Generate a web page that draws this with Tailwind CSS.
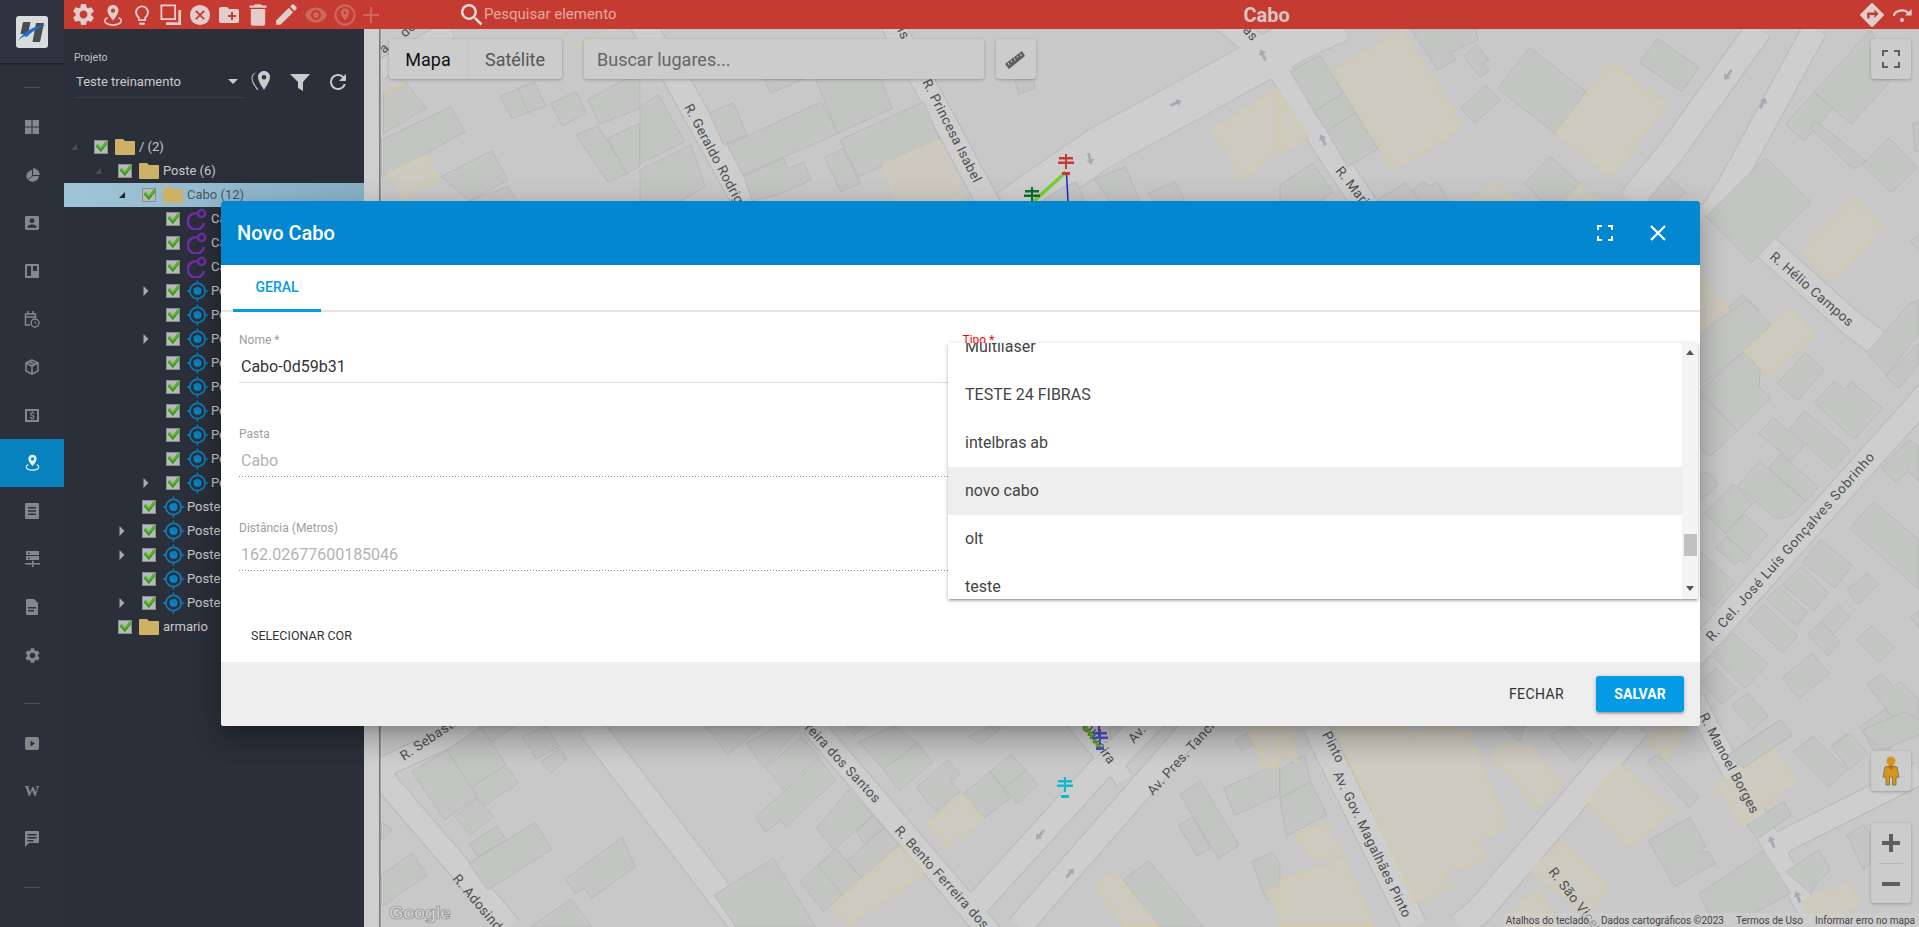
<!DOCTYPE html>
<html lang="pt-BR">
<head>
<meta charset="utf-8" />
<title>Cabo</title>
<script src="https://cdn.jsdelivr.net/npm/@tailwindcss/browser@4"></script>
</head>
<body class="font-[family-name:Roboto,sans-serif] bg-[#2b2f39] overflow-hidden">

<!-- shared icons -->
<svg class="hidden">
  <symbol id="chk" viewBox="0 0 14 14"><rect x=".5" y=".5" width="13" height="13" fill="#b9bbbb" stroke="#8a8c8d"/><path d="M1.500 6l2.500-2 2.800 3L12 1l2 2.200-7.200 9z" fill="#3f9a25"/><path d="M4 4.800l2.800 2.800L12 2.200l.8 1L6.800 9 3 5.600z" fill="#6cc83a"/></symbol>
  <symbol id="folder" viewBox="0 0 20 16"><path d="M1 0h7l2 2h9q1 0 1 1v12q0 1-1 1H1q-1 0-1-1V1q0-1 1-1z" fill="#cdb266"/></symbol>
  <symbol id="cable" viewBox="0 0 21 22"><circle cx="14.500" cy="5.500" r="3.600" fill="none" stroke="#6f2eab" stroke-width="2.400"/><path d="M10 5.300A8.200 8.200 0 1 0 17 15" fill="none" stroke="#6f2eab" stroke-width="2.600"/></symbol>
  <symbol id="target" viewBox="0 0 22 22"><circle cx="11" cy="11" r="8" fill="none" stroke="#0b7fbf" stroke-width="1.800"/><circle cx="11" cy="11" r="4.300" fill="#0b7fbf"/><path d="M11 0v3M11 19v3M0 11h3M19 11h3" stroke="#0b7fbf" stroke-width="1.400"/></symbol>
  <symbol id="open" viewBox="0 0 8 8"><path d="M7 1v6H1z" fill="currentColor"/></symbol>
  <symbol id="closed" viewBox="0 0 8 12"><path d="M1.500 1l5 5-5 5z" fill="#a6a8aa"/></symbol>
  <symbol id="pole" viewBox="0 0 16 22"><path d="M7 0h2v3h6v2.500H9v2h7V10H9v5H7v-5H0V7.500h7v-2H1V3h6z" fill="currentColor"/><rect x="4" y="18" width="8" height="3" fill="currentColor"/></symbol>
  <symbol id="arr" viewBox="-6 -7 12 14"><path d="M0-6l4 5H1.400v7h-2.800v-7H-4z" fill="#a5a9b5"/></symbol>
</svg>

<div class="flex h-[927px] w-[1919px] relative">

  <!-- left rail -->
  <aside class="w-16 shrink-0 bg-[#2b303a] flex flex-col items-center text-[#85878a]">
    <div class="w-full h-[63px] bg-[#2f323e] shadow-[0_1px_2px_rgba(0,0,0,.4)] flex items-center justify-center">
      <svg width="32" height="32" viewBox="0 0 32 32"><rect width="32" height="32" rx="3" fill="#d8dcdd"/><path d="M7 6h7.500l-2.500 12H4.500zM20 7h8l-4 19h-7.500z" fill="#4a4c4f"/><path d="M2 25C8 15 18 10 30 9 22 12 15 16 11 21 8 19 5 22 2 25z" fill="#1a6fd0"/></svg>
    </div>
    <div class="h-10 w-full flex items-center justify-center"><div class="w-4 h-px bg-[#4b4f57] mt-[8px]"></div></div>
    <a class="h-12 w-full flex items-center justify-center"><svg width="14" height="14" viewBox="0 0 14 14" fill="currentColor"><path d="M0 0h6.500v6.500H0zM7.500 0H14v6.500H7.500zM0 7.500h6.500V14H0zM7.500 7.500H14V14H7.500z"/></svg></a>
    <a class="h-12 w-full flex items-center justify-center"><svg width="15" height="15" viewBox="0 0 15 15" fill="currentColor"><path d="M7 3v5l-4.800 3.500A6.500 6.500 0 0 1 7 2zM8 0v7h7A7.500 7.500 0 0 0 8 0zM8 8l-5 3.800A6.500 6.500 0 0 0 14 8z"/></svg></a>
    <a class="h-12 w-full flex items-center justify-center"><svg width="18" height="18" viewBox="3 3 18 18" fill="currentColor" class="size-[14px]"><path d="M19 3H5c-1.100 0-2 .9-2 2v14c0 1.100.9 2 2 2h14c1.100 0 2-.9 2-2V5c0-1.100-.9-2-2-2zm-7 3c1.660 0 3 1.340 3 3s-1.340 3-3 3-3-1.340-3-3 1.340-3 3-3zm6 12H6v-1c0-2 4-3.100 6-3.100s6 1.100 6 3.100v1z"/></svg></a>
    <a class="h-12 w-full flex items-center justify-center"><svg width="14" height="14" viewBox="0 0 14 14" fill="currentColor"><path fill-rule="evenodd" d="M1 0h12q1 0 1 1v12q0 1-1 1H1q-1 0-1-1V1q0-1 1-1zm1 2v10h4V2zm6 0v5h4V2z"/></svg></a>
    <a class="h-12 w-full flex items-center justify-center"><svg width="16" height="17" viewBox="0 0 16 17" fill="none" stroke="currentColor" stroke-width="1.500"><path d="M6 14H1.500V3h10v4M1.500 6h10" /><path d="M4 0v3M9 0v3"/><circle cx="11" cy="12" r="4"/><path d="M11 10v2l1.500 1" stroke-width="1"/></svg></a>
    <a class="h-12 w-full flex items-center justify-center"><svg width="14" height="16" viewBox="0 0 14 16" fill="none" stroke="currentColor" stroke-width="1.600"><path d="M7 1l6 3v8l-6 3-6-3V4z"/><path d="M1 4l6 3 6-3M7 7v8M4 2.500l6 3"/></svg></a>
    <a class="h-12 w-full flex items-center justify-center"><svg width="14" height="13" viewBox="0 0 14 13"><path fill-rule="evenodd" fill="currentColor" d="M0 0h14v13H0zm2 2v9h10V2z"/><text x="7" y="10" text-anchor="middle" font-size="9" font-weight="700" fill="currentColor" font-family="Roboto">$</text></svg></a>
    <a class="h-12 w-full flex items-center justify-center bg-[#0882bf] text-[#e6eef2]"><svg width="15" height="18" viewBox="0 0 18 20" fill="currentColor"><path fill-rule="evenodd" d="M9 0c3 0 5 2.200 5 5 0 3-3 6.500-5 9-2-2.500-5-6-5-9 0-2.800 2-5 5-5zm0 3.200a1.900 1.900 0 1 0 0 3.800 1.900 1.900 0 0 0 0-3.800z"/><path d="M4 12c-1.800.7-2.500 1.700-2.500 2.800C1.500 17 5 18.500 9 18.500s7.500-1.500 7.500-3.700c0-1.100-.7-2.100-2.500-2.800" fill="none" stroke="currentColor" stroke-width="1.500"/></svg></a>
    <a class="h-12 w-full flex items-center justify-center"><svg width="14" height="16" viewBox="0 0 14 16" fill="currentColor"><path fill-rule="evenodd" d="M1 0h12q1 0 1 1v14q0 1-1 1H1q-1 0-1-1V1q0-1 1-1zm2 4v1.500h8V4zm0 3.200v1.500h8V7.200zm0 3.200v1.500h8v-1.500z"/></svg></a>
    <a class="h-12 w-full flex items-center justify-center"><svg width="15" height="16" viewBox="0 0 15 16" fill="currentColor"><path fill-rule="evenodd" d="M1 0h13v4H1zm0 5h13v4H1zm6 4.500h1.500V12H15v1.500H8.500V16H7v-2.500H0V12h7zM3 1.500V3h1.500V1.500zm0 5V8h1.500V6.500z"/></svg></a>
    <a class="h-12 w-full flex items-center justify-center"><svg width="12" height="16" viewBox="0 0 12 16" fill="currentColor"><path fill-rule="evenodd" d="M1 0h7l4 4v11q0 1-1 1H1q-1 0-1-1V1q0-1 1-1zm1 8v1.500h8V8zm0 3v1.500h6V11z"/></svg></a>
    <a class="h-12 w-full flex items-center justify-center"><svg width="15" height="15" viewBox="2.500 2 19 20" fill="currentColor"><path d="M19.140 12.940c.04-.3.06-.61.06-.94 0-.32-.02-.64-.07-.94l2.030-1.580c.18-.14.23-.41.12-.61l-1.920-3.320c-.12-.22-.37-.29-.59-.22l-2.390.96c-.5-.38-1.030-.7-1.620-.94l-.36-2.540c-.04-.24-.24-.41-.48-.41h-3.840c-.24 0-.43.17-.47.41l-.36 2.540c-.59.24-1.130.57-1.620.94l-2.390-.96c-.22-.08-.47 0-.59.22L2.740 8.870c-.12.21-.08.47.12.61l2.030 1.580c-.05.3-.09.63-.09.94s.02.64.07.94l-2.030 1.580c-.18.14-.23.41-.12.61l1.920 3.320c.12.22.37.29.59.22l2.390-.96c.5.38 1.030.7 1.620.94l.36 2.540c.05.24.24.41.48.41h3.840c.24 0 .44-.17.47-.41l.36-2.540c.59-.24 1.130-.56 1.620-.94l2.390.96c.22.08.47 0 .59-.22l1.920-3.320c.12-.22.07-.47-.12-.61l-2.010-1.580zM12 15.600c-1.980 0-3.600-1.620-3.600-3.600s1.620-3.600 3.600-3.600 3.600 1.620 3.600 3.600-1.620 3.600-3.600 3.600z"/></svg></a>
    <div class="h-12 w-full flex items-center justify-center"><div class="w-4 h-px bg-[#4b4f57]"></div></div>
    <a class="h-8 mb-2 w-full flex items-center justify-center"><svg width="14" height="13" viewBox="0 0 14 13" fill="currentColor"><path fill-rule="evenodd" d="M2 0h10q2 0 2 2v9q0 2-2 2H2q-2 0-2-2V2q0-2 2-2zm3.500 3.500v6l4.500-3z"/></svg></a>
    <a class="h-12 w-full flex items-center justify-center font-['Liberation_Serif',serif] text-[15px] font-bold">W</a>
    <a class="h-12 w-full flex items-center justify-center"><svg width="14" height="16" viewBox="0 0 14 16" fill="currentColor"><path fill-rule="evenodd" d="M1 0h12q1 0 1 1v10q0 1-1 1H4l-4 4V1q0-1 1-1zm1.500 3v1.500h9V3zm0 3v1.500h9V6zm0 3v1.500h6V9z"/></svg></a>
    <div class="h-12 w-full flex items-center justify-center"><div class="w-4 h-px bg-[#4b4f57]"></div></div>
  </aside>

  <div class="flex-1 flex flex-col min-w-0">
    <!-- red top bar -->
    <header class="h-[29px] shrink-0 bg-[#c53b32] flex items-center text-[#e3cdcb] relative z-10">
      <div class="flex items-center pl-[5px]">
        <span class="w-[29px] flex justify-center"><svg class="size-[23px]" viewBox="1.500 1.500 21 21" fill="currentColor"><path d="M19.140 12.940c.04-.3.06-.61.06-.94 0-.32-.02-.64-.07-.94l2.030-1.580c.18-.14.23-.41.12-.61l-1.920-3.320c-.12-.22-.37-.29-.59-.22l-2.390.96c-.5-.38-1.030-.7-1.620-.94l-.36-2.540c-.04-.24-.24-.41-.48-.41h-3.840c-.24 0-.43.17-.47.41l-.36 2.540c-.59.24-1.130.57-1.620.94l-2.390-.96c-.22-.08-.47 0-.59.22L2.740 8.870c-.12.21-.08.47.12.61l2.030 1.580c-.05.3-.09.63-.09.94s.02.64.07.94l-2.030 1.580c-.18.14-.23.41-.12.61l1.920 3.320c.12.22.37.29.59.22l2.390-.96c.5.38 1.030.7 1.620.94l.36 2.540c.05.24.24.41.48.41h3.840c.24 0 .44-.17.47-.41l.36-2.540c.59-.24 1.130-.56 1.620-.94l2.390.96c.22.08.47 0 .59-.22l1.920-3.320c.12-.22.07-.47-.12-.61l-2.010-1.580zM12 15.600c-1.980 0-3.600-1.620-3.600-3.600s1.620-3.600 3.600-3.600 3.600 1.620 3.600 3.600-1.620 3.600-3.600 3.600z"/></svg></span>
        <span class="w-[29px] flex justify-center"><svg class="size-[22px]" viewBox="0 0 22 24" fill="currentColor"><path fill-rule="evenodd" d="M11 1c3.600 0 6 2.700 6 6 0 3.600-3.500 8-6 11-2.500-3-6-7.400-6-11 0-3.300 2.400-6 6-6zm0 4a2.300 2.300 0 1 0 0 4.600A2.300 2.300 0 0 0 11 5z"/><path d="M5 15c-2.200.8-3 2-3 3.300C2 21 6 23 11 23s9-2 9-4.700c0-1.300-.8-2.500-3-3.300" fill="none" stroke="currentColor" stroke-width="1.800"/></svg></span>
        <span class="w-[29px] flex justify-center"><svg class="size-[22px]" viewBox="0 0 22 24" fill="none" stroke="currentColor" stroke-width="2"><path d="M7.500 17.500v-2.800C5.400 13.300 4.500 11.300 4.500 9a6.500 6.500 0 0 1 13 0c0 2.300-.9 4.300-3 5.700v2.800z"/><path d="M8 21.500h6" stroke-width="2.400"/></svg></span>
        <span class="w-[29px] flex justify-center"><svg class="size-[22px]" viewBox="0 0 24 24" fill="none" stroke="currentColor" stroke-width="2"><rect x="1.500" y="1.500" width="15" height="15"/><path d="M21.500 6.500v15h-15" stroke-width="3"/></svg></span>
        <span class="w-[29px] flex justify-center"><svg class="size-[22px]" viewBox="0 0 24 24"><circle cx="12" cy="12" r="11" fill="currentColor"/><path d="M7.500 7.500l9 9M16.500 7.500l-9 9" stroke="#c53b32" stroke-width="2"/></svg></span>
        <span class="w-[29px] flex justify-center"><svg class="size-[22px]" viewBox="1 3 22 18" fill="currentColor"><path d="M20 6h-8l-2-2H4c-1.100 0-2 .9-2 2v12c0 1.100.9 2 2 2h16c1.100 0 2-.9 2-2V8c0-1.100-.9-2-2-2zm-1 8h-3v3h-2v-3h-3v-2h3V9h2v3h3v2z"/></svg></span>
        <span class="w-[29px] flex justify-center"><svg class="size-[24px]" viewBox="3 2 18 20" fill="currentColor"><path d="M6 19c0 1.100.9 2 2 2h8c1.100 0 2-.9 2-2V7H6v12zM19 4h-3.500l-1-1h-5l-1 1H5v2h14V4z"/></svg></span>
        <span class="w-[29px] flex justify-center"><svg class="size-[23px]" viewBox="2 2 20 20" fill="currentColor"><path d="M3 17.250V21h3.750L17.810 9.940l-3.750-3.750L3 17.250zM20.710 7.040c.39-.39.39-1.020 0-1.410l-2.340-2.340c-.39-.39-1.020-.39-1.410 0l-1.830 1.830 3.750 3.750 1.830-1.830z"/></svg></span>
        <span class="w-[29px] flex justify-center opacity-30"><svg class="size-[24px]" viewBox="0 0 24 24" fill="currentColor"><path d="M12 4.500C7 4.500 2.730 7.610 1 12c1.730 4.390 6 7.500 11 7.500s9.270-3.110 11-7.500c-1.730-4.390-6-7.500-11-7.500zM12 17c-2.760 0-5-2.240-5-5s2.240-5 5-5 5 2.240 5 5-2.240 5-5 5zm0-8c-1.660 0-3 1.340-3 3s1.340 3 3 3 3-1.340 3-3-1.340-3-3-3z"/></svg></span>
        <span class="w-[29px] flex justify-center opacity-30"><svg class="size-[22px]" viewBox="0 0 24 24"><circle cx="12" cy="12" r="10.500" fill="none" stroke="currentColor" stroke-width="2.200"/><path fill-rule="evenodd" fill="currentColor" d="M12 5c2.800 0 4.500 2 4.500 4.500 0 2.800-2.500 6-4.500 8.500-2-2.500-4.500-5.700-4.500-8.500C7.500 7 9.200 5 12 5zm0 3a1.600 1.600 0 1 0 0 3.200A1.600 1.600 0 0 0 12 8z"/></svg></span>
        <span class="w-[23px] flex justify-center opacity-30"><svg class="size-[18px]" viewBox="0 0 18 18" fill="currentColor"><path d="M8 1h2v7h7v2h-7v7H8v-7H1V8h7z"/></svg></span>
      </div>
      <svg class="size-[22px] ml-[79px] text-[#e8dede]" viewBox="3 3 18 18" fill="currentColor"><path d="M15.500 14h-.79l-.28-.27A6.471 6.471 0 0 0 16 9.500 6.500 6.500 0 1 0 9.500 16c1.610 0 3.090-.59 4.230-1.570l.27.28v.79l5 4.990L20.490 19l-4.990-5zm-6 0C7.010 14 5 11.990 5 9.500S7.010 5 9.500 5 14 7.010 14 9.500 11.990 14 9.500 14z"/></svg>
      <span class="ml-[1px] text-[15px] text-[#e6a8a2] whitespace-nowrap">Pesquisar elemento</span>
      <span class="ml-[627px] text-[20px] font-bold text-[#dcc4c1]">Cabo</span>
      <div class="ml-auto flex items-center gap-[7px] pr-[6px]">
        <svg class="size-[24px]" viewBox="2 2 20 20" fill="currentColor"><path d="M21.710 11.290l-9-9a.996.996 0 0 0-1.410 0l-9 9a.996.996 0 0 0 0 1.410l9 9c.39.39 1.020.39 1.410 0l9-9a.996.996 0 0 0 0-1.410zM14 14.500V12h-4v3H8v-4c0-.55.45-1 1-1h5V7.500l3.500 3.500-3.500 3.500z"/></svg>
        <svg class="size-[22px]" viewBox="0 0 24 24" fill="none" stroke="currentColor" stroke-width="2.400"><path d="M3 13a9 7.500 0 0 1 16-3"/><path d="M22.500 5.500v7h-7z" fill="currentColor" stroke="none"/><circle cx="12" cy="17.500" r="2.200" fill="currentColor" stroke="none"/></svg>
      </div>
    </header>

    <div class="flex-1 flex min-h-0">
      <!-- project tree -->
      <section class="w-[300px] shrink-0 bg-[#2b2f39] text-[#c9cacb] text-[13px]">
        <div class="pt-[22px] pl-[10px] pr-[12px]">
          <div class="text-[10.500px] leading-[14px] text-[#bfc0c2]">Projeto</div>
          <div class="flex items-center h-8 mt-[1px]">
            <div class="w-[171px] h-8 border-b border-[#3a3e47] flex items-center justify-between pl-[2px] pr-[7px]">
              <span class="text-[13px] text-[#c9cacb]">Teste treinamento</span>
              <svg width="10" height="5" viewBox="0 0 10 5"><path d="M0 0h10L5 5z" fill="#c9cacb"/></svg>
            </div>
            <svg class="size-[24px] ml-[4px]" viewBox="0 0 24 24" fill="#c9cacb"><path fill-rule="evenodd" d="M15 1c3.400 0 6 2.500 6 6 0 4-3.600 9-6 13-2.400-4-6-9-6-13 0-3.500 2.600-6 6-6zm0 4a2.300 2.300 0 1 0 0 4.600A2.300 2.300 0 0 0 15 5z"/><path d="M7.500 2.500C5 3.700 3.500 5.800 3.500 8.300c0 3.400 3 7.500 6 11.200L8.200 20C5.200 16 2.500 12 2.500 8c0-2.900 2-5 5-5.500z"/></svg>
            <svg class="size-[22px] ml-[16px]" viewBox="0 0 22 22" fill="#c9cacb"><path d="M1 3h20l-7 8v9l-5-3v-6z"/></svg>
            <svg class="size-[24px] ml-[15px]" viewBox="0 0 24 24" fill="#c9cacb"><path d="M17.650 6.350A7.958 7.958 0 0 0 12 4c-4.420 0-7.990 3.580-7.990 8s3.570 8 7.990 8c3.730 0 6.840-2.550 7.730-6h-2.080A5.990 5.990 0 0 1 12 18c-3.310 0-6-2.690-6-6s2.690-6 6-6c1.660 0 3.140.69 4.220 1.780L13 11h7V4l-2.350 2.350z"/></svg>
          </div>
        </div>
        <ul class="mt-[37px]">
          <li class="h-6 flex items-center pl-[6px]"><svg class="size-[8px] mr-[16px] text-[#4c4f57]" ><use href="#open"/></svg><svg class="w-[14px] h-[14px] mr-[7px]"><use href="#chk"/></svg><svg class="w-5 h-4 mr-1"><use href="#folder"/></svg><span>/ (2)</span></li>
          <li class="h-6 flex items-center pl-[30px]"><svg class="size-[8px] mr-[16px] text-[#4c4f57]"><use href="#open"/></svg><svg class="w-[14px] h-[14px] mr-[7px]"><use href="#chk"/></svg><svg class="w-5 h-4 mr-1"><use href="#folder"/></svg><span>Poste (6)</span></li>
          <li class="h-6 flex items-center pl-[54px] bg-gradient-to-r from-[#9fc4d7] to-[#88b1c7] text-[#4a5662]"><svg class="size-[8px] mr-[16px] text-[#22252a]"><use href="#open"/></svg><svg class="w-[14px] h-[14px] mr-[7px]"><use href="#chk"/></svg><svg class="w-5 h-4 mr-1"><use href="#folder"/></svg><span>Cabo (12)</span></li>
          <li class="h-6 flex items-center pl-[102px]"><svg class="w-[14px] h-[14px] mr-[7px]"><use href="#chk"/></svg><svg class="w-[21px] h-[22px] mr-[3px]"><use href="#cable"/></svg><span>Cabo</span></li>
          <li class="h-6 flex items-center pl-[102px]"><svg class="w-[14px] h-[14px] mr-[7px]"><use href="#chk"/></svg><svg class="w-[21px] h-[22px] mr-[3px]"><use href="#cable"/></svg><span>Cabo</span></li>
          <li class="h-6 flex items-center pl-[102px]"><svg class="w-[14px] h-[14px] mr-[7px]"><use href="#chk"/></svg><svg class="w-[21px] h-[22px] mr-[3px]"><use href="#cable"/></svg><span>Cabo</span></li>
          <li class="h-6 flex items-center pl-[78px]"><svg class="w-2 h-3 mr-[16px]"><use href="#closed"/></svg><svg class="w-[14px] h-[14px] mr-[7px]"><use href="#chk"/></svg><svg class="w-[21px] h-[22px] mr-[3px]"><use href="#target"/></svg><span>Poste</span></li>
          <li class="h-6 flex items-center pl-[102px]"><svg class="w-[14px] h-[14px] mr-[7px]"><use href="#chk"/></svg><svg class="w-[21px] h-[22px] mr-[3px]"><use href="#target"/></svg><span>Poste</span></li>
          <li class="h-6 flex items-center pl-[78px]"><svg class="w-2 h-3 mr-[16px]"><use href="#closed"/></svg><svg class="w-[14px] h-[14px] mr-[7px]"><use href="#chk"/></svg><svg class="w-[21px] h-[22px] mr-[3px]"><use href="#target"/></svg><span>Poste</span></li>
          <li class="h-6 flex items-center pl-[102px]"><svg class="w-[14px] h-[14px] mr-[7px]"><use href="#chk"/></svg><svg class="w-[21px] h-[22px] mr-[3px]"><use href="#target"/></svg><span>Poste</span></li>
          <li class="h-6 flex items-center pl-[102px]"><svg class="w-[14px] h-[14px] mr-[7px]"><use href="#chk"/></svg><svg class="w-[21px] h-[22px] mr-[3px]"><use href="#target"/></svg><span>Poste</span></li>
          <li class="h-6 flex items-center pl-[102px]"><svg class="w-[14px] h-[14px] mr-[7px]"><use href="#chk"/></svg><svg class="w-[21px] h-[22px] mr-[3px]"><use href="#target"/></svg><span>Poste</span></li>
          <li class="h-6 flex items-center pl-[102px]"><svg class="w-[14px] h-[14px] mr-[7px]"><use href="#chk"/></svg><svg class="w-[21px] h-[22px] mr-[3px]"><use href="#target"/></svg><span>Poste</span></li>
          <li class="h-6 flex items-center pl-[102px]"><svg class="w-[14px] h-[14px] mr-[7px]"><use href="#chk"/></svg><svg class="w-[21px] h-[22px] mr-[3px]"><use href="#target"/></svg><span>Poste</span></li>
          <li class="h-6 flex items-center pl-[78px]"><svg class="w-2 h-3 mr-[16px]"><use href="#closed"/></svg><svg class="w-[14px] h-[14px] mr-[7px]"><use href="#chk"/></svg><svg class="w-[21px] h-[22px] mr-[3px]"><use href="#target"/></svg><span>Poste</span></li>
          <li class="h-6 flex items-center pl-[78px]"><svg class="w-[14px] h-[14px] mr-[7px]"><use href="#chk"/></svg><svg class="w-[21px] h-[22px] mr-[3px]"><use href="#target"/></svg><span>Poste</span></li>
          <li class="h-6 flex items-center pl-[54px]"><svg class="w-2 h-3 mr-[16px]"><use href="#closed"/></svg><svg class="w-[14px] h-[14px] mr-[7px]"><use href="#chk"/></svg><svg class="w-[21px] h-[22px] mr-[3px]"><use href="#target"/></svg><span>Poste</span></li>
          <li class="h-6 flex items-center pl-[54px]"><svg class="w-2 h-3 mr-[16px]"><use href="#closed"/></svg><svg class="w-[14px] h-[14px] mr-[7px]"><use href="#chk"/></svg><svg class="w-[21px] h-[22px] mr-[3px]"><use href="#target"/></svg><span>Poste</span></li>
          <li class="h-6 flex items-center pl-[78px]"><svg class="w-[14px] h-[14px] mr-[7px]"><use href="#chk"/></svg><svg class="w-[21px] h-[22px] mr-[3px]"><use href="#target"/></svg><span>Poste</span></li>
          <li class="h-6 flex items-center pl-[54px]"><svg class="w-2 h-3 mr-[16px]"><use href="#closed"/></svg><svg class="w-[14px] h-[14px] mr-[7px]"><use href="#chk"/></svg><svg class="w-[21px] h-[22px] mr-[3px]"><use href="#target"/></svg><span>Poste</span></li>
          <li class="h-6 flex items-center pl-[54px]"><svg class="w-[14px] h-[14px] mr-[7px]"><use href="#chk"/></svg><svg class="w-5 h-4 mr-1"><use href="#folder"/></svg><span>armario</span></li>
        </ul>
      </section>

      <!-- map -->
      <section class="flex-1 relative overflow-hidden bg-[#c8c8c8]">
        <svg class="absolute inset-0 [&_*]:[vector-effect:non-scaling-stroke]" width="1555" height="898" viewBox="364 29 1555 898">
          <g fill="none" stroke="#b9b9b9">
            <polyline stroke-width="26" points="640,20 677,80 744,201"/>
            <polyline stroke-width="24" points="890,20 1000,225"/>
            <polyline stroke-width="44" points="1010,210 1100,148 1216,85 1300,38 1340,20"/>
            <polyline stroke-width="26" points="1225,20 1275,62 1296,95 1325,145 1365,205"/>
            <polyline stroke-width="28" points="1759,29 1670,153 1631,201"/>
            <polyline stroke-width="26" points="1815,29 1729,187 1712,213"/>
            <polyline stroke-width="27" points="1712,205 1766,247 1850,322 1880,345"/>
            <polyline stroke-width="26" points="1930,390 1915,408 1707,640 1690,660"/>
            <polyline stroke-width="22" points="1695,700 1708,726 1802,900 1819,927"/>
            <polyline stroke-width="27" points="1315,726 1415,927"/>
            <polyline stroke-width="28" points="1637,726 1480,910 1460,927"/>
            <polyline stroke-width="24" points="1920,773 1792,837 1770,850"/>
            <polyline stroke-width="24" points="813,726 979,920 1000,945"/>
            <polyline stroke-width="26" points="1160,700 1101,768 979,902 966,913"/>
            <polyline stroke-width="26" points="1215,700 1174,750 1019,927"/>
            <polyline stroke-width="20" points="1070,715 1125,780"/>
            <polyline stroke-width="24" points="370,760 390,787 510,927"/>
            <polyline stroke-width="22" points="381,768 473,726 500,700"/>
            <polyline stroke-width="28" points="590,726 745,927"/>
            <polyline stroke-width="18" points="1117,763 1152,726 1185,700"/>
            <polyline stroke-width="20" points="380,70 450,29"/>
          </g>
          <g fill="none" stroke="#cecece">
            <polyline stroke-width="24" points="640,20 677,80 744,201"/>
            <polyline stroke-width="22" points="890,20 1000,225"/>
            <polyline stroke-width="42" points="1010,210 1100,148 1216,85 1300,38 1340,20"/>
            <polyline stroke-width="24" points="1225,20 1275,62 1296,95 1325,145 1365,205"/>
            <polyline stroke-width="26" points="1759,29 1670,153 1631,201"/>
            <polyline stroke-width="24" points="1815,29 1729,187 1712,213"/>
            <polyline stroke-width="25" points="1712,205 1766,247 1850,322 1880,345"/>
            <polyline stroke-width="24" points="1930,390 1915,408 1707,640 1690,660"/>
            <polyline stroke-width="20" points="1695,700 1708,726 1802,900 1819,927"/>
            <polyline stroke-width="25" points="1315,726 1415,927"/>
            <polyline stroke-width="26" points="1637,726 1480,910 1460,927"/>
            <polyline stroke-width="22" points="1920,773 1792,837 1770,850"/>
            <polyline stroke-width="22" points="813,726 979,920 1000,945"/>
            <polyline stroke-width="24" points="1160,700 1101,768 979,902 966,913"/>
            <polyline stroke-width="24" points="1215,700 1174,750 1019,927"/>
            <polyline stroke-width="18" points="1070,715 1125,780"/>
            <polyline stroke-width="22" points="370,760 390,787 510,927"/>
            <polyline stroke-width="20" points="381,768 473,726 500,700"/>
            <polyline stroke-width="26" points="590,726 745,927"/>
            <polyline stroke-width="16" points="1117,763 1152,726 1185,700"/>
            <polyline stroke-width="18" points="380,70 450,29"/>
          </g>

          <!-- top left block -->
          <g transform="scale(.408,.3333)" fill="#c3c5c3" stroke="#b7b8b7">
            <polygon points="1225,290 1310,245 1338,318 1255,355"/><path d="M1270,268L1295,340"/>
            <polygon points="1350,310 1412,275 1437,340 1378,377"/>
            <polygon points="1440,300 1568,215 1568,325 1470,372"/>
            <polygon points="1412,405 1465,378 1540,520 1490,545"/>
            <polygon points="1490,415 1568,370 1568,500 1535,520"/>
            <polygon points="940,280 992,245 1045,325 975,375 940,400"/>
            <polygon points="935,420 1105,320 1140,395 1045,460 935,530"/>
            <polygon points="1082,530 1205,453 1245,540 1150,603"/>
            <polygon points="1150,603 1245,560 1268,603"/>
            <polygon fill="#cdcac0" stroke="#dccb96" points="948,520 1045,462 1075,535 985,595"/>
            <polyline fill="none" stroke="#dccb96" points="1375,87 1400,150 1500,87"/>
            <polyline fill="none" stroke="#dccb96" points="940,280 990,245 940,310"/>
          </g>
          <!-- top middle block -->
          <g transform="translate(640,0) scale(.408,.3333)" fill="#c3c5c3" stroke="#b7b8b7">
            <polygon points="0,320 45,285 110,425 0,490"/>
            <polygon points="0,510 125,435 160,560 100,603 0,603"/>
            <polygon points="170,340 228,308 262,405 205,435"/>
            <polygon points="215,435 445,305 485,400 252,525"/>
            <polygon points="430,237 590,237 618,325 485,400"/>
            <polygon points="305,237 400,237 320,280"/>
            <polygon points="452,472 497,447 540,550 492,575"/>
            <polygon points="490,420 695,305 735,420 535,530"/>
            <polygon points="255,528 353,475 362,505 402,487 420,540 335,585 275,603"/>
            <polygon points="918,237 965,237 968,265 928,282"/>
            <polygon points="1115,538 1190,500 1225,603 1150,603"/>
            <polygon points="1245,580 1312,545 1335,603 1262,603"/>
            <polygon points="1040,560 1070,545 1090,603 985,603"/>
            <polygon fill="#cdc8c0" stroke="#dccdb0" points="595,495 735,420 795,590 770,603 630,603"/>
            <polygon fill="#cdcac0" stroke="#dccb96" points="1402,393 1562,265 1568,270 1568,440 1478,538"/>
          </g>
          <!-- top right block -->
          <g transform="translate(1280,0) scale(.408,.3333)" fill="#c3c5c3" stroke="#b7b8b7">
            <polygon points="25,215 98,165 155,280 85,335"/>
            <polygon points="82,335 155,280 185,340 115,392"/>
            <polygon points="115,392 185,340 240,447 165,500"/>
            <polygon points="320,87 480,87 485,120 415,160 432,178 387,210"/>
            <polygon points="450,170 482,133 512,180 498,190 512,212 492,232"/>
            <polygon points="443,325 505,255 540,300 477,370"/>
            <polygon points="533,265 612,143 750,275 675,400"/>
            <polygon points="881,187 925,115 1027,202 985,275"/>
            <polygon points="600,550 662,470 735,550 695,603 640,603"/>
            <polygon points="1045,650 1190,473 1302,605 1155,788"/>
            <polygon points="1238,372 1310,277 1355,325 1285,423"/>
            <polygon points="1310,360 1435,482 1405,507 1302,385"/>
            <polygon points="1428,495 1493,413 1562,502 1498,578"/>
            <polygon points="1355,325 1310,275 1448,90 1500,237 1400,372"/>
            <polygon points="900,603 950,530 995,577 970,603"/>
            <polygon points="0,555 80,490 130,575 100,603 0,603"/>
            <polygon points="235,603 308,548 340,603"/>
            <polygon points="325,570 352,545 365,558 385,547 415,603 345,603"/>
            <polygon points="1090,930 1135,885 1175,930"/>
            <polygon points="1545,725 1568,700 1568,755"/>
            <polygon points="1550,370 1568,368 1568,455 1558,455"/>
            <g fill="#cdcac0" stroke="#dccb96">
              <polygon points="128,215 298,90 448,380 280,512"/>
              <polygon points="675,400 810,187 947,317 812,530"/>
              <polygon points="1277,755 1404,595 1478,685 1350,842"/>
              <polygon points="475,603 525,543 580,603"/>
              <polygon points="695,603 735,553 780,603"/>
              <polygon points="0,280 70,410 0,465"/>
              <polygon points="1030,830 1100,930 1030,930"/>
              <polygon points="1535,930 1568,895 1568,930"/>
            </g>
          </g>
          <!-- right of the dialog -->
          <g transform="translate(1700,300) scale(.3333)" fill="#c3c5c3" stroke="#b7b8b7">
            <polygon points="0,100 140,0 213,75 133,155 0,255"/>
            <polygon points="0,270 133,155 180,210 178,263 213,295 112,392"/>
            <polygon points="0,280 112,392 30,470 0,445"/>
            <polygon points="233,250 315,158 373,210 293,302"/>
            <polygon points="343,308 402,245 433,270 455,245 547,325 463,418"/>
            <polygon points="177,400 220,352 312,437 273,483"/>
            <polygon points="267,388 313,332 450,450 400,508"/>
            <polygon points="207,503 242,462 355,560 316,603"/>
            <polygon points="112,558 180,485 316,603 267,652 225,655"/>
            <polygon points="13,640 100,552 158,610 75,700"/>
            <polygon points="75,700 133,642 203,705 143,770"/>
            <polygon points="47,742 78,710 152,770 133,790 120,780 105,795"/>
            <polygon points="0,520 25,518 55,550 0,605"/>
            <polygon points="0,755 105,848 42,920 0,880"/>
            <polygon points="307,787 362,720 457,797 405,863"/>
            <polygon points="247,855 305,800 385,878 342,932"/>
            <polygon points="200,900 237,860 323,938 290,977"/>
            <polygon points="145,962 192,913 293,1008 247,1058"/>
            <polygon points="442,870 502,820 535,853 475,913"/>
            <polygon points="363,965 415,915 450,950 400,1002"/>
            <polygon points="323,1003 363,967 422,1025 383,1066"/>
            <polygon points="40,1070 97,1000 207,1093 135,1165"/>
            <polygon points="247,1133 337,1060 388,1122 297,1195"/>
            <polygon points="470,1020 515,977 583,1042 537,1088"/>
            <polygon points="3,1145 47,1105 113,1170 65,1213"/>
            <polygon points="95,1218 142,1178 205,1248 157,1290"/>
            <polygon points="502,1153 545,1120 580,1160 602,1145 657,1200 657,1260 610,1295"/>
            <polygon points="480,1280 555,1228 610,1295 570,1350 520,1350"/>
            <polygon points="130,1330 240,1260 275,1307 210,1350 110,1350"/>
            <polygon points="290,1350 337,1310 370,1350"/>
            <polygon points="395,1335 443,1300 480,1350 410,1350"/>
            <polygon points="545,505 627,418 657,440 657,545 623,513 590,548"/>
            <polygon points="450,685 520,605 657,720 657,870"/>
            <polygon points="633,950 657,930 657,985"/>
            <polygon points="500,158 630,10 657,0 657,100 560,225"/>
            <polygon points="558,228 657,130 657,190 597,265"/>
            <polygon fill="#cdcac0" stroke="#dccb96" points="133,155 267,25 345,103 208,232"/>
            <polygon fill="#cdc8c0" stroke="#dccb96" points="0,0 65,0 83,22 0,100"/>
          </g>
          <!-- bottom left -->
          <g transform="translate(0,620) scale(.408,.3333)" fill="#c3c5c3" stroke="#b7b8b7">
            <polygon points="1010,455 1095,390 1170,530 1090,600"/>
            <polygon points="1095,390 1178,320 1240,435 1155,503"/>
            <polygon points="1155,503 1240,435 1270,490 1190,555 1170,530"/>
            <polygon points="1115,590 1170,535 1210,590 1152,645"/>
            <polygon points="1150,672 1218,618 1240,660 1172,710"/>
            <polygon points="1150,730 1312,607 1353,688 1195,810"/>
            <polygon points="1280,350 1340,318 1370,380 1315,417"/>
            <polygon points="1325,425 1375,385 1388,420 1350,458"/>
            <polygon points="935,605 962,630 935,660"/>
            <polygon points="935,765 1010,700 1047,765 935,860"/>
            <polygon points="1385,778 1525,652 1557,740 1450,835 1432,805 1412,822"/>
            <polygon points="1300,921 1400,838 1450,921"/>
            <polygon points="1205,365 1265,318 1175,318"/>
          </g>
          <!-- bottom middle -->
          <g transform="translate(640,700) scale(.408,.3333)" fill="#c3c5c3" stroke="#b7b8b7">
            <polygon points="160,78 300,78 215,163"/>
            <polygon points="260,130 340,78 395,78 305,203"/>
            <polygon points="310,203 395,110 440,170 350,267"/>
            <polygon points="283,352 440,178 480,240 357,382 345,360 308,398"/>
            <polygon points="433,385 510,270 570,345 475,450"/>
            <polygon points="530,395 570,347 597,380 550,432"/>
            <polygon points="508,483 597,385 635,435 543,535"/>
            <polygon points="392,545 480,447 540,535 450,635"/>
            <polygon points="437,497 480,447 543,535 497,585"/>
            <polygon points="182,585 327,475 430,681 235,681"/>
            <polygon points="537,125 625,78 680,130 597,208"/>
            <polygon points="597,208 680,130 717,187 637,272"/>
            <polygon points="677,263 755,180 785,222 762,245 785,275 725,335"/>
            <polygon points="792,283 858,215 908,295 842,355"/>
            <polygon points="858,215 910,162 945,212 893,265"/>
            <polygon points="893,265 945,212 975,255 925,310"/>
            <polygon points="805,110 860,78 885,85 835,133"/>
            <polygon points="505,78 555,78 525,105"/>
            <polygon points="1320,375 1355,350 1398,445 1365,468"/>
            <polygon points="1323,282 1373,243 1468,435 1417,475"/>
            <polygon points="1458,120 1495,95 1505,130 1475,153"/>
            <polygon points="1430,265 1568,190 1568,285 1458,345"/>
            <polygon points="1185,540 1248,483 1380,681 1270,681"/>
            <polygon points="1500,485 1550,458 1568,490 1568,575 1535,600"/>
            <polygon points="1150,78 1185,78 1155,120"/>
            <g fill="#cdcac0" stroke="#dccb96">
              <polygon points="705,372 792,283 842,355 755,445"/>
              <polygon points="470,615 635,437 697,520 510,677"/>
              <polygon points="1113,558 1162,510 1272,681 1190,681"/>
              <polygon points="1490,90 1568,78 1568,200 1530,205"/>
              <polygon points="1535,575 1568,560 1568,640"/>
            </g>
          </g>
          <!-- bottom right -->
          <g transform="translate(1280,700) scale(.408,.3333)" fill="#c3c5c3" stroke="#b7b8b7">
            <polygon points="545,78 600,78 585,125"/>
            <polygon points="660,105 710,78 765,130 720,188"/>
            <polygon points="900,185 927,163 1027,292 1003,322"/>
            <polygon points="903,422 1005,352 1043,437 1030,458 1050,455 1067,490 967,560"/>
            <polygon points="1028,580 1185,452 1252,580 1100,681 1067,681"/>
            <polygon points="1240,515 1320,450 1350,510 1317,547 1300,580"/>
            <polygon points="1145,375 1235,305 1253,345 1170,417"/>
            <polygon points="1098,165 1228,60 1255,103 1135,205"/>
            <polygon points="1258,155 1307,110 1390,210 1345,262"/>
            <polygon points="1352,140 1397,100 1440,160 1395,210"/>
            <polygon points="1425,92 1530,35 1568,60 1568,105 1475,150"/>
            <polygon points="1390,405 1430,375 1470,450 1430,510"/>
            <polygon points="0,295 75,245 115,345 15,408"/>
            <polygon points="0,210 60,165 75,245 0,295"/>
            <g fill="#cdcac0" stroke="#dccb96">
              <polygon points="130,78 310,78 320,112 390,78 430,78 435,105 460,93 557,385 485,425 502,475 403,527 413,565 330,610"/>
              <polygon points="518,172 555,130 578,158 603,127 695,250 630,322"/>
              <polygon points="752,310 830,190 965,333 857,442"/>
              <polygon points="612,512 692,420 808,567 750,640"/>
              <polygon points="565,635 633,565 680,681 590,681"/>
              <polygon points="903,112 938,78 975,78 990,100 945,178"/>
              <polygon points="1070,258 1213,147 1267,243 1210,297 1135,380"/>
              <polygon points="1280,605 1335,565 1345,585 1392,547 1425,610 1375,650 1295,640"/>
              <polygon points="40,405 112,368 155,465 75,475"/>
              <polygon points="0,540 160,480 230,681 0,681"/>
              <polygon points="0,78 20,78 45,190 0,160"/>
            </g>
          </g>

          <!-- direction arrows -->
          <use href="#arr" width="12" height="14" transform="translate(1728,75) rotate(215) translate(-6,-7)"/>
          <use href="#arr" width="12" height="14" transform="translate(1763,103) rotate(30) translate(-6,-7)"/>
          <use href="#arr" width="12" height="14" transform="translate(1323,140) rotate(-25) translate(-6,-7)"/>
          <use href="#arr" width="12" height="14" transform="translate(1263,55) rotate(-25) translate(-6,-7)"/>
          <use href="#arr" width="12" height="14" transform="translate(1176,103) rotate(65) translate(-6,-7)"/>
          <use href="#arr" width="12" height="14" transform="translate(1090,159) rotate(165) translate(-6,-7)"/>
          <use href="#arr" width="12" height="14" transform="translate(1040,835) rotate(220) translate(-6,-7)"/>
          <use href="#arr" width="12" height="14" transform="translate(1070,873) rotate(40) translate(-6,-7)"/>
          <use href="#arr" width="12" height="14" transform="translate(1772,842) rotate(-20) translate(-6,-7)"/>
          <use href="#arr" width="12" height="14" transform="translate(1798,897) rotate(-20) translate(-6,-7)"/>

          <!-- street names -->
          <g font-size="13.500" fill="#4b4e53" font-family="Roboto, sans-serif" letter-spacing=".4">
            <text transform="translate(684,107) rotate(62)">R. Geraldo Rodrigues</text>
            <text transform="translate(922,82) rotate(63)">R. Princesa Isabel</text>
            <text transform="translate(897,30) rotate(63)">Is</text>
            <text text-anchor="end" transform="translate(1252,42) rotate(50)">as</text>
            <text transform="translate(1335,171) rotate(52)">R. Maria</text>
            <text transform="translate(1769,258) rotate(41)">R. Hélio Campos</text>
            <text letter-spacing=".7" transform="translate(1712,642) rotate(-48.500)">R. Cel. José Luís Gonçalves Sobrinho</text>
            <text transform="translate(1699,716) rotate(62)">R. Manoel Borges</text>
            <text transform="translate(404,761) rotate(-34)">R. Sebastião</text>
            <text transform="translate(452,879) rotate(50)">R. Adosinda</text>
            <text text-anchor="end" transform="translate(875,804) rotate(47)">Ferreira dos Santos</text>
            <text transform="translate(894,831) rotate(48)">R. Bento Ferreira dos Santos</text>
            <text text-anchor="end" transform="translate(1109,765) rotate(54)">Oliveira</text>
            <text transform="translate(1134,744) rotate(-48)">Av. Pres</text>
            <text transform="translate(1153,796) rotate(-48)">Av. Pres. Tancredo</text>
            <text text-anchor="end" transform="translate(1337,764) rotate(63)">Pinto</text>
            <text transform="translate(1333,774) rotate(64)">Av. Gov. Magalhães Pinto</text>
            <text transform="translate(1548,872) rotate(52)">R. São Vicente</text>
            <text transform="translate(384,54) rotate(-42)">a</text>
            <text transform="translate(405,38) rotate(-42)">do</text>
          </g>

          <!-- cable sketch -->
          <path d="M1066 172L1034 201" stroke="#76d02f" stroke-width="3.500" fill="none"/>
          <path d="M1066.500 173L1068 201" stroke="#2222cc" stroke-width="1.500" fill="none"/>
          <path d="M1085 726L1099 747" stroke="#5fae24" stroke-width="3.500" fill="none"/>
          <path d="M1099 726V738" stroke="#2222cc" stroke-width="1.500" fill="none"/>
          <use href="#pole" x="1058" y="154" width="16" height="22" color="#c53b32"/>
          <use href="#pole" x="1024" y="187" width="16" height="22" color="#0f6b2f"/>
          <use href="#pole" x="1092" y="729" width="16" height="22" color="#4a55c4"/>
          <use href="#pole" x="1057" y="777" width="16" height="22" color="#14b8d0"/>

          <!-- strip beside the tree -->
          <rect x="364" y="29" width="15" height="898" fill="#cfcfcf"/>
          <rect x="379" y="29" width="1.500" height="898" fill="#777"/>

          <text x="389" y="919" font-family="Liberation Sans, sans-serif" font-weight="700" font-size="19" letter-spacing="-.8" fill="#d6d6d6" stroke="#8a8a8a" stroke-width=".7">Google</text>
        </svg>

        <!-- map controls -->
        <div class="absolute left-[25px] top-[10px] h-10 flex rounded-[3px] bg-[#cccccc] shadow-[0_1px_3px_rgba(0,0,0,.25)] text-[18px]">
          <span class="w-[79px] flex items-center justify-center text-[#111] border-r border-[#c4c4c4]">Mapa</span>
          <span class="w-[94px] flex items-center justify-center text-[#555]">Satélite</span>
        </div>
        <div class="absolute left-[220px] top-[10px] w-[400px] h-10 pl-[13px] flex items-center rounded-[3px] bg-[#cccccc] shadow-[0_1px_3px_rgba(0,0,0,.25)] text-[18px] text-[#666]">Buscar lugares...</div>
        <div class="absolute left-[632px] top-[10px] size-10 flex items-center justify-center rounded-[3px] bg-[#cccccc] shadow-[0_1px_3px_rgba(0,0,0,.25)]">
          <svg width="24" height="24" viewBox="0 0 24 24" fill="#5e5e5e"><path d="M1 17L18 4l3 5L5 22zM3.600 16l1.500 2.300.8-.6-1.500-2.300zm3-2.200l1 1.500.8-.6-1-1.500zm3-2.300l1.500 2.300.8-.6-1.500-2.300zm3-2.300l1 1.500.8-.6-1-1.500zm3-2.200l1.500 2.300.8-.6-1.500-2.300z" fill-rule="evenodd"/></svg>
        </div>
        <div class="absolute right-[8px] top-[10px] size-10 flex items-center justify-center rounded-[3px] bg-[#cccccc] shadow-[0_1px_3px_rgba(0,0,0,.25)]">
          <svg width="18" height="18" viewBox="0 0 18 18" fill="none" stroke="#5e5e5e" stroke-width="2"><path d="M1 6V1h5M12 1h5v5M1 12v5h5M12 17h5v-5"/></svg>
        </div>
        <div class="absolute right-[8px] top-[722px] size-10 flex items-center justify-center rounded-[3px] bg-[#cccccc] shadow-[0_1px_3px_rgba(0,0,0,.25)]">
          <svg width="18" height="30" viewBox="0 0 18 30"><circle cx="9" cy="5" r="4.500" fill="#d0961f"/><path d="M3 11q6-3 12 0l2 10-3 .5V29h-3.500v-8h-3v8H4v-7.500L1 21z" fill="#d0961f" stroke="#7a6a3a" stroke-width=".8"/><path d="M5 10l4 4 4-4z" fill="#b8642a"/></svg>
        </div>
        <div class="absolute right-[8px] top-[794px] w-10 h-20 flex flex-col items-center rounded-[3px] bg-[#cccccc] shadow-[0_1px_3px_rgba(0,0,0,.25)]">
          <div class="h-10 flex items-center"><svg width="18" height="18" viewBox="0 0 18 18" fill="#5e5e5e"><path d="M7 0h4v7h7v4h-7v7H7v-7H0V7h7z"/></svg></div>
          <div class="w-6 h-px bg-[#b5b5b5]"></div>
          <div class="h-[39px] flex items-center"><svg width="18" height="4" viewBox="0 0 18 4" fill="#5e5e5e"><rect width="18" height="4"/></svg></div>
        </div>
        <div class="absolute right-0 bottom-0 h-[14px] flex items-center gap-3 pl-[2px] pr-1 bg-[#cfcfcf]/60 text-[10px] text-[#444] whitespace-nowrap">
          <span>Atalhos do teclado</span><span>Dados cartográficos ©2023</span><span>Termos de Uso</span><span>Informar erro no mapa</span>
        </div>
      </section>
    </div>
  </div>

  <!-- dialog -->
  <div class="absolute left-[221px] top-[201px] w-[1479px] h-[525px] z-20 flex flex-col bg-white rounded-[3px] shadow-[0_16px_24px_2px_rgba(0,0,0,.14),0_6px_30px_5px_rgba(0,0,0,.12),0_8px_10px_-7px_rgba(0,0,0,.2)]">
    <div class="h-16 shrink-0 bg-[#0387d1] rounded-t-[3px] flex items-center pl-4 text-white">
      <h2 class="text-[20px] font-medium">Novo Cabo</h2>
      <div class="ml-auto flex items-center">
        <svg class="mr-[36px]" width="16" height="16" viewBox="0 0 16 16" fill="none" stroke="#fff" stroke-width="2"><path d="M1 5V1h4M11 1h4v4M1 11v4h4M11 15h4v-4"/></svg>
        <svg class="mr-[33px]" width="18" height="18" viewBox="0 0 18 18" fill="none" stroke="#fff" stroke-width="2.200"><path d="M2 2l14 14M16 2L2 16"/></svg>
      </div>
    </div>
    <div class="h-[47px] shrink-0 border-b-2 border-[#e3e3e3] pl-3 flex relative">
      <div class="w-[88px] h-[47px] border-b-[3px] border-[#039be5] flex items-center justify-center text-[#039be5] text-[14px] font-medium">GERAL</div>
    </div>
    <div class="flex-1 relative">
      <div class="grid grid-cols-2 pl-[18px] pr-[14px] pt-[21px]">
        <div class="pr-[4px]">
          <div class="h-[94px]">
            <label class="block text-[12px] leading-[14px] text-[#9e9e9e]">Nome *</label>
            <div class="mt-[4px] h-[32px] border-b border-[#dedede] pl-[2px] flex items-center text-[16px] text-[#333]">Cabo-0d59b31</div>
          </div>
          <div class="h-[94px]">
            <label class="block text-[12px] leading-[14px] text-[#9e9e9e]">Pasta</label>
            <div class="mt-[4px] h-[32px] pl-[2px] flex items-center text-[16px] text-[#b3b3b3] bg-[repeating-linear-gradient(90deg,#8f8f8f_0_1px,transparent_1px_3px)] bg-[length:100%_1px] bg-bottom bg-no-repeat">Cabo</div>
          </div>
          <div class="h-[94px]">
            <label class="block text-[12px] leading-[14px] text-[#9e9e9e]">Distância (Metros)</label>
            <div class="mt-[4px] h-[32px] pl-[2px] flex items-center text-[16px] text-[#b3b3b3] bg-[repeating-linear-gradient(90deg,#8f8f8f_0_1px,transparent_1px_3px)] bg-[length:100%_1px] bg-bottom bg-no-repeat">162.02677600185046</div>
          </div>
        </div>
        <div>
          <label class="block text-[12px] leading-[14px] text-[#ff0000]">Tipo *</label>
        </div>
      </div>
      <button class="absolute left-[30px] bottom-[16px] text-[12.500px] text-[#333]">SELECIONAR COR</button>

      <!-- open select -->
      <div class="absolute left-[727px] top-[31px] w-[750px] h-[256px] bg-white overflow-hidden flex shadow-[0_2px_2px_0_rgba(0,0,0,.14),0_3px_1px_-2px_rgba(0,0,0,.12),0_1px_5px_0_rgba(0,0,0,.2)] z-10">
        <ul class="flex-1 -mt-5 text-[16px] text-[#444]">
          <li class="h-12 pl-[17px] flex items-center">Multilaser</li>
          <li class="h-12 pl-[17px] flex items-center">TESTE 24 FIBRAS</li>
          <li class="h-12 pl-[17px] flex items-center">intelbras ab</li>
          <li class="h-12 pl-[17px] flex items-center bg-[#eeeeee]">novo cabo</li>
          <li class="h-12 pl-[17px] flex items-center">olt</li>
          <li class="h-12 pl-[17px] flex items-center">teste</li>
        </ul>
        <div class="w-4 bg-[#f4f4f4] relative shrink-0">
          <svg class="absolute left-[4px] top-[7px]" width="8" height="5" viewBox="0 0 8 5"><path d="M0 5l4-5 4 5z" fill="#555"/></svg>
          <div class="absolute left-[2px] top-[191px] w-[13px] h-[22px] bg-[#c1c1c1]"></div>
          <svg class="absolute left-[4px] bottom-[8px]" width="8" height="5" viewBox="0 0 8 5"><path d="M0 0l4 5 4-5z" fill="#555"/></svg>
        </div>
      </div>
    </div>
    <div class="h-16 shrink-0 bg-[#eeeeee] rounded-b-[3px] flex items-center justify-end pr-4">
      <button class="text-[14px] tracking-[.4px] text-[#333] mr-[32px]">FECHAR</button>
      <button class="w-[88px] h-9 rounded-[3px] bg-[#039be5] text-white text-[14px] font-bold shadow-[0_2px_2px_0_rgba(0,0,0,.14),0_3px_1px_-2px_rgba(0,0,0,.12),0_1px_5px_0_rgba(0,0,0,.2)]">SALVAR</button>
    </div>
  </div>
</div>
</body>
</html>
